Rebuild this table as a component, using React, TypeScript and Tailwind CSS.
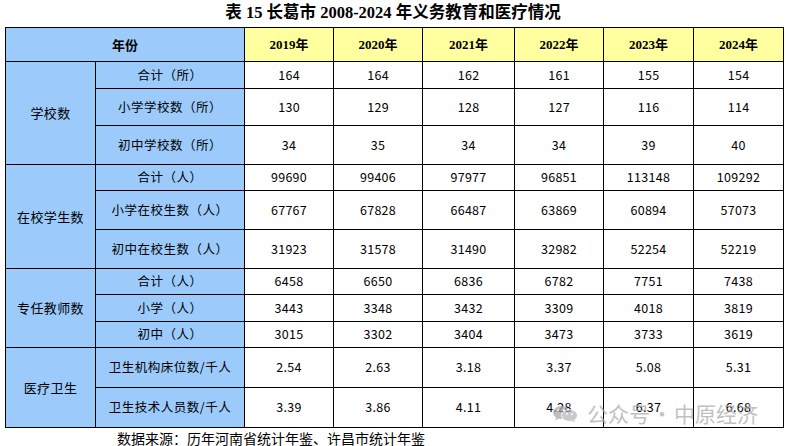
const years = ['2019', '2020', '2021', '2022', '2023', '2024']

type Row = { label: string; h: string; values: string[] }
type Group = { name: string; rows: Row[] }

const groups: Group[] = [
  {
    name: '学校数',
    rows: [
      { label: '合计（所）', h: 'h-[27px]', values: ['164', '164', '162', '161', '155', '154'] },
      { label: '小学学校数（所）', h: 'h-[37px]', values: ['130', '129', '128', '127', '116', '114'] },
      { label: '初中学校数（所）', h: 'h-[39px]', values: ['34', '35', '34', '34', '39', '40'] },
    ],
  },
  {
    name: '在校学生数',
    rows: [
      { label: '合计（人）', h: 'h-[26px]', values: ['99690', '99406', '97977', '96851', '113148', '109292'] },
      { label: '小学在校生数（人）', h: 'h-[39px]', values: ['67767', '67828', '66487', '63869', '60894', '57073'] },
      { label: '初中在校生数（人）', h: 'h-[39px]', values: ['31923', '31578', '31490', '32982', '52254', '52219'] },
    ],
  },
  {
    name: '专任教师数',
    rows: [
      { label: '合计（人）', h: 'h-[26px]', values: ['6458', '6650', '6836', '6782', '7751', '7438'] },
      { label: '小学（人）', h: 'h-[27px]', values: ['3443', '3348', '3432', '3309', '4018', '3819'] },
      { label: '初中（人）', h: 'h-[26px]', values: ['3015', '3302', '3404', '3473', '3733', '3619'] },
    ],
  },
  {
    name: '医疗卫生',
    rows: [
      { label: '卫生机构床位数/千人', h: 'h-[40px]', values: ['2.54', '2.63', '3.18', '3.37', '5.08', '5.31'] },
      { label: '卫生技术人员数/千人', h: 'h-[40px]', values: ['3.39', '3.86', '4.11', '4.28', '6.37', '6.68'] },
    ],
  },
]

const cjk = "font-['Noto_Sans_CJK_SC',sans-serif]"
const cell = 'border border-black p-0 text-center align-middle'

function WeChatIcon() {
  return (
    <svg width="25" height="16" viewBox="0 0 25 16">
      <ellipse cx="8.5" cy="6.5" rx="8.5" ry="6.5" fill="#a3a3a3" />
      <path d="M3 11 L2.5 14.5 L6.5 12 Z" fill="#a3a3a3" />
      <ellipse cx="16.5" cy="9.5" rx="8" ry="6" fill="#b5b5b5" stroke="#fff" strokeWidth="1" />
      <path d="M21 14 L22.5 16 L18.5 15 Z" fill="#b5b5b5" />
      <circle cx="5.5" cy="4.5" r="1.1" fill="#fff" />
      <circle cx="11" cy="4.5" r="1.1" fill="#fff" />
      <circle cx="14" cy="8" r="0.9" fill="#fff" />
      <circle cx="19" cy="8" r="0.9" fill="#fff" />
    </svg>
  )
}

export default function App() {
  return (
    <div className="relative w-[786px] h-[446px] overflow-hidden bg-white text-black">
      <div className="h-[27px] flex items-center justify-center font-bold text-[16.5px] font-['Liberation_Serif','Noto_Sans_CJK_SC',serif]">
        表 15 长葛市 2008-2024 年义务教育和医疗情况
      </div>

      <table className="ml-[5px] w-[778px] table-fixed border-collapse">
        <colgroup>
          <col className="w-[90px]" />
          <col className="w-[149px]" />
          <col className="w-[89px]" />
          <col className="w-[89px]" />
          <col className="w-[92px]" />
          <col className="w-[89px]" />
          <col className="w-[90px]" />
          <col className="w-[90px]" />
        </colgroup>
        <tbody>
          <tr className="h-[34px]">
            <td colSpan={2} className={`${cell} bg-[#9ccbfb] font-bold text-[13px] ${cjk}`}>年份</td>
            {years.map(y => (
              <td key={y} className={`${cell} bg-[#ffffa0] font-bold text-[13px]`}>
                <span className="font-['Liberation_Serif',serif]">{y}</span>
                <span className={cjk}>年</span>
              </td>
            ))}
          </tr>
          {groups.map(g =>
            g.rows.map((r, i) => (
              <tr key={g.name + r.label} className={r.h}>
                {i === 0 && (
                  <td rowSpan={g.rows.length} className={`${cell} bg-[#9ccbfb] text-[13px] tracking-[0.4px] ${cjk}`}>
                    {g.name}
                  </td>
                )}
                <td className={`${cell} bg-[#9ccbfb] text-[12.5px] tracking-[0.5px] ${cjk}`}>{r.label}</td>
                {r.values.map((v, j) => (
                  <td key={j} className={`${cell} text-[12.5px] tracking-[0.3px] ${cjk}`}>{v}</td>
                ))}
              </tr>
            ))
          )}
        </tbody>
      </table>

      <div className={`pl-[117px] pt-[2px] text-[14px] leading-[16px] ${cjk}`}>
        数据来源：历年河南省统计年鉴、许昌市统计年鉴
      </div>

      <div className="absolute left-[553px] top-[403px] flex items-center gap-[9px] opacity-70">
        <WeChatIcon />
        <div className={`flex items-center text-[21px] leading-none text-[#a8a8a8] ${cjk}`}>
          <span>公众号</span>
          <span className="w-[24px] text-center">·</span>
          <span>中原经济</span>
        </div>
      </div>
    </div>
  )
}
